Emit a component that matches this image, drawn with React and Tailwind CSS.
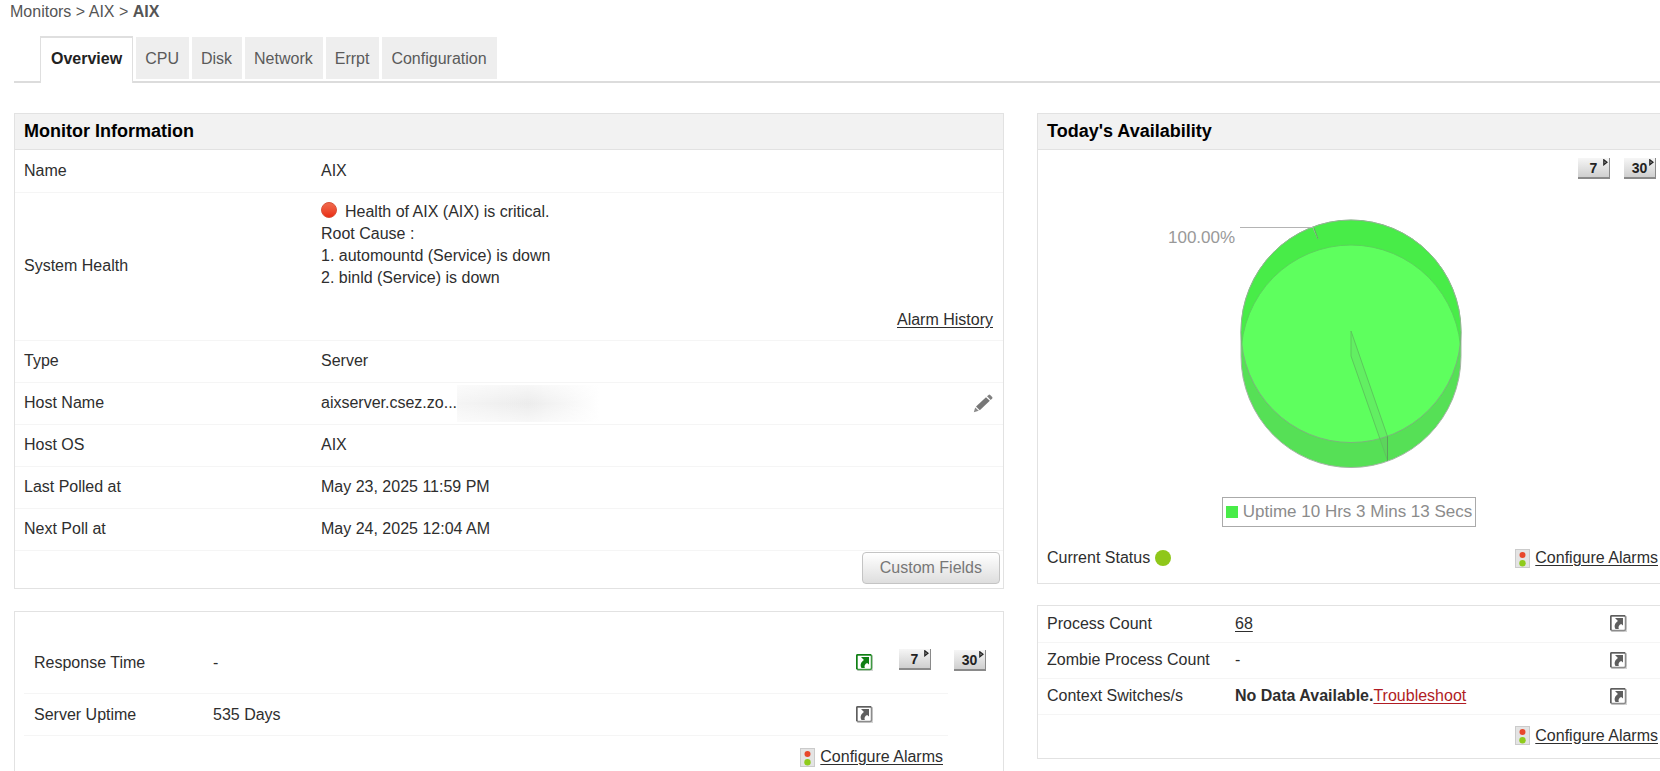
import clsx from 'clsx';

const TABS = ['Overview', 'CPU', 'Disk', 'Network', 'Errpt', 'Configuration'];

const ArrowBox = ({ active }) => {
  const color = active ? '#0f7f14' : '#5e5e5e';
  return (
    <svg className="block h-[17px] w-[17px]" viewBox="0 0 17 17" aria-hidden="true">
      <rect x="1" y="1" width="16" height="16" fill="#d4d4d4" />
      <rect x="0.75" y="0.75" width="14.75" height="14.75" rx="1.5" fill="#fff" stroke={active ? '#3f9a42' : '#8c8c8c'} strokeWidth="1.5" />
      <path d="M0.75 15V1.5Q0.75 0.75 1.5 0.75H15" fill="none" stroke={color} strokeWidth="1.5" />
      <path d="M5 3H13V10.6L11.2 9C9 10 8 11.6 8.8 14H5.6C3.6 11 5 8 8 6L5 3Z" fill={color} />
    </svg>
  );
};

const ArrowButton = ({ label, active }) => (
  <button type="button" aria-label={label} className="block cursor-pointer">
    <ArrowBox active={active} />
  </button>
);

const PeriodButton = ({ days }) => (
  <button
    type="button"
    aria-label={`Last ${days} days`}
    className="relative block h-[21px] w-8 cursor-pointer border-r border-b-2 border-[#8a8a8a] bg-linear-to-b from-[#f6f6f6] to-[#cfcfcf] text-[14px] leading-[20px] font-bold text-[#222]"
  >
    {days}
    <svg className="absolute top-px right-px h-[7px] w-[5px]" viewBox="0 0 5 7" aria-hidden="true">
      <path d="M0.8 0.8L4 3.2L0.8 5.8Z" fill="#999" stroke="#222" strokeWidth="1.2" />
    </svg>
  </button>
);

const ConfigureAlarms = () => (
  <a href="#alarms" className="inline-flex items-center gap-[5px]">
    <svg className="h-[19px] w-[15px]" viewBox="0 0 15 19" aria-hidden="true">
      <rect x="0.5" y="0.5" width="14" height="18" fill="#e4e4e4" stroke="#cbcbcb" />
      <circle cx="7.5" cy="6" r="3" fill="#e8472b" />
      <circle cx="7.5" cy="14.2" r="3.2" fill="#8fcb1c" />
    </svg>
    <span className="underline underline-offset-2">Configure Alarms</span>
  </a>
);

const PanelTitle = ({ children }) => (
  <h2 className="border-b border-[#e2e2e2] bg-[#f2f2f2] px-[9px] py-[6px] text-[18px] leading-[23px] font-bold text-black">{children}</h2>
);

const InfoRow = ({ label, children, tall }) => (
  <tr className={clsx('border-b border-[#f5f5f5]', tall ? 'h-[148px]' : 'h-[42px]')}>
    <th scope="row" className="w-[306px] pl-[9px] text-left font-normal">{label}</th>
    <td className="pr-[10px]">{children}</td>
  </tr>
);

const MonitorInformation = () => (
  <section className="border border-[#e2e2e2]">
    <PanelTitle>Monitor Information</PanelTitle>
    <table className="w-full">
      <tbody>
        <InfoRow label="Name">AIX</InfoRow>
        <InfoRow label="System Health" tall>
          <div className="flex items-center gap-2">
            <span className="mb-1 h-4 w-4 rounded-full border border-[#d8523a] bg-linear-to-b from-[#f0694c] to-[#ea2a10]" />
            <span>Health of AIX (AIX) is critical.</span>
          </div>
          <div>Root Cause :</div>
          <div>1. automountd (Service) is down</div>
          <div>2. binld (Service) is down</div>
          <div className="mt-5 text-right">
            <a href="#history" className="underline underline-offset-2">Alarm History</a>
          </div>
        </InfoRow>
        <InfoRow label="Type">Server</InfoRow>
        <InfoRow label="Host Name">
          <div className="flex items-center">
            <span>aixserver.csez.zo...</span>
            <span className="h-[37px] w-[142px] bg-linear-to-r from-[#f5f5f5] via-[#ececec] to-white">
              <span className="block h-full bg-linear-to-b from-white/60 via-transparent to-white/60" />
            </span>
            <button type="button" aria-label="Edit host name" className="ml-auto cursor-pointer">
              <svg className="block h-[19px] w-5" viewBox="0 0 20 19" aria-hidden="true">
                <path d="M0.8 18.2L2.2 13.4L5.8 16.8Z" fill="#8a8a8a" />
                <path d="M3 12.4L13 3.2L16.8 6.8L6.8 16.2Z" fill="#777" />
                <path d="M14 2.3L15.6 0.9Q16.4 0.3 17.2 1L19.2 3Q19.8 3.8 19.2 4.6L17.7 6Z" fill="#808080" />
              </svg>
            </button>
          </div>
        </InfoRow>
        <InfoRow label="Host OS">AIX</InfoRow>
        <InfoRow label="Last Polled at">May 23, 2025 11:59 PM</InfoRow>
        <InfoRow label="Next Poll at">May 24, 2025 12:04 AM</InfoRow>
      </tbody>
    </table>
    <div className="flex justify-end px-[3px] pt-px pb-1">
      <button type="button" className="h-8 cursor-pointer rounded-[4px] border border-[#c4c4c4] bg-linear-to-b from-white to-[#dedede] px-[17px] text-[#777]">
        Custom Fields
      </button>
    </div>
  </section>
);

const ResponsePanel = () => (
  <section className="border border-[#e2e2e2] pt-[21px] pb-4">
    <div className="pl-[9px]">
      <table className="w-full">
        <tbody>
          <tr className="h-[61px]">
            <th scope="row" className="w-[189px] border-b border-[#f5f5f5] pl-[10px] text-left font-normal">Response Time</th>
            <td className="border-b border-[#f5f5f5]">-</td>
            <td className="w-[43px] border-b border-[#f5f5f5]"><ArrowButton label="Response time details" active /></td>
            <td className="w-[49px] border-b border-[#f5f5f5] pb-[6px]"><PeriodButton days={7} /></td>
            <td className="w-[55px] pb-[6px] pl-[6px]"><PeriodButton days={30} /></td>
          </tr>
          <tr className="h-[42px]">
            <th scope="row" className="border-b border-[#f5f5f5] pl-[10px] text-left font-normal">Server Uptime</th>
            <td className="border-b border-[#f5f5f5]">535 Days</td>
            <td className="border-b border-[#f5f5f5]"><ArrowButton label="Server uptime details" /></td>
            <td className="border-b border-[#f5f5f5]" />
            <td />
          </tr>
        </tbody>
      </table>
    </div>
    <div className="flex justify-end pt-[10px] pr-[60px]">
      <ConfigureAlarms />
    </div>
  </section>
);

// 3D pie: two stacked ellipses, the face is where they overlap
const AvailabilityPie = () => (
  <svg className="h-[250px] w-[372px]" viewBox="0 0 372 250" role="img" aria-label="Availability 100.00%">
    <defs>
      <clipPath id="topFace">
        <ellipse cx="188" cy="112.3" rx="110" ry="111.3" />
      </clipPath>
    </defs>
    <path d="M78 112.3A110 111.3 0 0 1 298 112.3V137.3A110 111.3 0 0 1 78 137.3Z" fill="#56e056" stroke="#a5b5a5" />
    <ellipse cx="188" cy="112.3" rx="110" ry="111.3" fill="#48ec48" />
    <ellipse cx="188" cy="137.3" rx="110" ry="111.3" fill="#5eff5e" stroke="#5bd25b" clipPath="url(#topFace)" />
    <path d="M78 112.3A110 111.3 0 0 0 298 112.3" fill="none" stroke="#7cb57c" />
    <path d="M78 112.3A110 111.3 0 0 1 298 112.3" fill="none" stroke="#8fb98f" />
    <path d="M188 112L224.5 217.5V241.5L188 137Z" fill="#7a9a7a" fillOpacity="0.16" stroke="#5cc85c" />
    <path d="M224.5 217.5V241.5" stroke="#5aa35a" />
    <path d="M77 8.5H150L155 20" fill="none" stroke="#b4b4b4" />
    <path d="M151 9L155 20" fill="none" stroke="#5cae5c" />
    <text x="5" y="24" fontSize="17" fill="#999">100.00%</text>
  </svg>
);

const TodaysAvailability = () => (
  <section className="border border-r-0 border-[#e2e2e2]">
    <PanelTitle>Today's Availability</PanelTitle>
    <div className="flex justify-end gap-[14px] pt-2 pr-1">
      <PeriodButton days={7} />
      <PeriodButton days={30} />
    </div>
    <div className="flex flex-col items-center pt-10">
      <AvailabilityPie />
      <div className="mt-7 flex h-[30px] items-center gap-[5px] border border-[#aaa] px-[3px] text-[17px] text-[#8c8c8c]">
        <span className="h-3 w-3 bg-[#48ec48]" />
        Uptime 10 Hrs 3 Mins 13 Secs
      </div>
    </div>
    <div className="flex items-center justify-between pt-5 pr-[2px] pb-[14px] pl-[9px]">
      <span className="flex items-center gap-[5px]">
        Current Status
        <span className="h-4 w-4 rounded-full bg-[#8fc71a]" />
      </span>
      <ConfigureAlarms />
    </div>
  </section>
);

const ProcessPanel = () => {
  const rows = [
    { label: 'Process Count', value: <a href="#processes" className="underline underline-offset-2">68</a> },
    { label: 'Zombie Process Count', value: '-' },
    {
      label: 'Context Switches/s',
      value: <><b>No Data Available.</b><a href="#troubleshoot" className="text-[#b01c24] underline underline-offset-2">Troubleshoot</a></>,
    },
  ];
  return (
    <section className="border border-r-0 border-[#e2e2e2]">
      <table className="w-full">
        <tbody>
          {rows.map((row) => (
            <tr key={row.label} className="h-9 border-b border-[#f5f5f5]">
              <th scope="row" className="w-[197px] pl-[9px] text-left font-normal">{row.label}</th>
              <td>{row.value}</td>
              <td className="w-[50px]"><ArrowButton label={`${row.label} details`} /></td>
            </tr>
          ))}
        </tbody>
      </table>
      <div className="flex justify-end pt-[10px] pr-[2px] pb-[11px]">
        <ConfigureAlarms />
      </div>
    </section>
  );
};

const App = () => (
  <div className="bg-white font-['Liberation_Sans',Arial,sans-serif] text-[16px] leading-[22px] text-[#2e2e2e]">
    <nav aria-label="Breadcrumb" className="pt-px pl-[10px] text-[#555]">
      <a href="#monitors">Monitors</a> &gt; <a href="#aix">AIX</a> &gt; <b>AIX</b>
    </nav>

    <nav aria-label="Monitor sections" className="pt-[13px] pl-[14px]">
      <div className="flex gap-[3px] border-b-2 border-[#dcdcdc] pl-[26px]">
        {TABS.map((tab, i) => (
          <a
            key={tab}
            href={`#${tab.toLowerCase()}`}
            className={clsx(
              i === 0
                ? '-mb-[2px] border-x border-t-2 border-[#dfdfdf] bg-white px-[10px] pt-[10px] pb-[13px] font-bold text-[#222]'
                : 'mt-px mb-[2px] bg-[#eee] pt-[11px] pr-[10px] pb-[9px] pl-[9px] text-[#5a5a5a]'
            )}
          >
            {tab}
          </a>
        ))}
      </div>
    </nav>

    <main className="grid grid-cols-[990fr_623fr] items-start gap-[33px] pt-[30px] pl-[14px]">
      <div className="flex flex-col gap-[22px]">
        <MonitorInformation />
        <ResponsePanel />
      </div>
      <div className="flex flex-col gap-[21px]">
        <TodaysAvailability />
        <ProcessPanel />
      </div>
    </main>
  </div>
);

export default App;
